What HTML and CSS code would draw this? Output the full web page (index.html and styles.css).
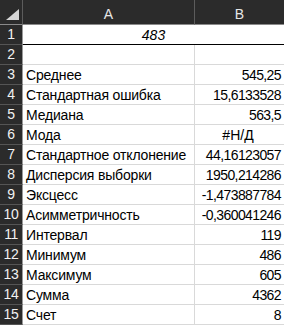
FILE: index.html
```html
<!DOCTYPE html>
<html lang="ru">
<head>
<meta charset="utf-8">
<link rel="stylesheet" href="styles.css">
</head>
<body>
<div class="sheet">
  <div class="corner"><span class="tri"></span></div>
  <div class="colhead sep">A</div>
  <div class="colhead">B</div>

  <div class="rowhead">1</div>
  <div class="cell merged thick"><i>483</i></div>

  <div class="rowhead">2</div>
  <div class="cell a"></div>
  <div class="cell b"></div>

  <div class="rowhead">3</div>
  <div class="cell a">Среднее</div>
  <div class="cell b">545,25</div>

  <div class="rowhead">4</div>
  <div class="cell a">Стандартная ошибка</div>
  <div class="cell b">15,6133528</div>

  <div class="rowhead">5</div>
  <div class="cell a">Медиана</div>
  <div class="cell b">563,5</div>

  <div class="rowhead">6</div>
  <div class="cell a">Мода</div>
  <div class="cell b center">#Н/Д</div>

  <div class="rowhead">7</div>
  <div class="cell a">Стандартное отклонение</div>
  <div class="cell b">44,16123057</div>

  <div class="rowhead">8</div>
  <div class="cell a">Дисперсия выборки</div>
  <div class="cell b">1950,214286</div>

  <div class="rowhead">9</div>
  <div class="cell a">Эксцесс</div>
  <div class="cell b">-1,473887784</div>

  <div class="rowhead">10</div>
  <div class="cell a">Асимметричность</div>
  <div class="cell b">-0,360041246</div>

  <div class="rowhead">11</div>
  <div class="cell a">Интервал</div>
  <div class="cell b">119</div>

  <div class="rowhead">12</div>
  <div class="cell a">Минимум</div>
  <div class="cell b">486</div>

  <div class="rowhead">13</div>
  <div class="cell a">Максимум</div>
  <div class="cell b">605</div>

  <div class="rowhead">14</div>
  <div class="cell a">Сумма</div>
  <div class="cell b">4362</div>

  <div class="rowhead">15</div>
  <div class="cell a">Счет</div>
  <div class="cell b">8</div>
</div>
</body>
</html>
```
FILE: styles.css
```css
html, body {
  margin: 0;
  padding: 0;
  background: #ffffff;
  overflow: hidden;
}
.sheet {
  display: grid;
  grid-template-columns: 23px 172px 89px;
  grid-template-rows: 25px repeat(15, 20px);
  width: 284px;
  font-family: "Liberation Sans", Arial, sans-serif;
  font-size: 14px;
  color: #000;
}
.corner {
  background: #2b2b2b;
  position: relative;
  border-right: 1px solid #5c5c5c;
  border-bottom: 1px solid #8a8a8a;
  box-sizing: border-box;
}
.tri {
  position: absolute;
  right: 3px;
  bottom: 4px;
  width: 0;
  height: 0;
  border-left: 13px solid transparent;
  border-bottom: 11px solid #d6d6d6;
}
.colhead {
  background: #2b2b2b;
  color: #e6e6e6;
  text-align: center;
  line-height: 25px;
  padding-top: 2px;
  box-sizing: border-box;
  border-bottom: 1px solid #8a8a8a;
}
.colhead.sep {
  border-right: 1px solid #5c5c5c;
}
.rowhead {
  background: #2b2b2b;
  color: #f2f2f2;
  text-align: center;
  line-height: 19px;
  letter-spacing: -0.4px;
  box-sizing: border-box;
  border-bottom: 1px solid #555555;
  border-right: 1px solid #9a9a9a;
}
.cell {
  box-sizing: border-box;
  border-bottom: 1px solid #d9d9d9;
  line-height: 20px;
  white-space: nowrap;
  overflow: hidden;
}
.cell.a {
  padding-left: 3px;
  letter-spacing: -0.18px;
  border-right: 1px solid #d9d9d9;
}
.cell.b {
  text-align: right;
  padding-right: 3px;
  letter-spacing: -0.6px;
}
.cell.b.center {
  text-align: center;
  letter-spacing: 0;
}
.cell.merged {
  grid-column: 2 / 4;
  text-align: center;
  padding-left: 0;
}
.cell.thick {
  border-bottom: 1px solid #000;
}
```
